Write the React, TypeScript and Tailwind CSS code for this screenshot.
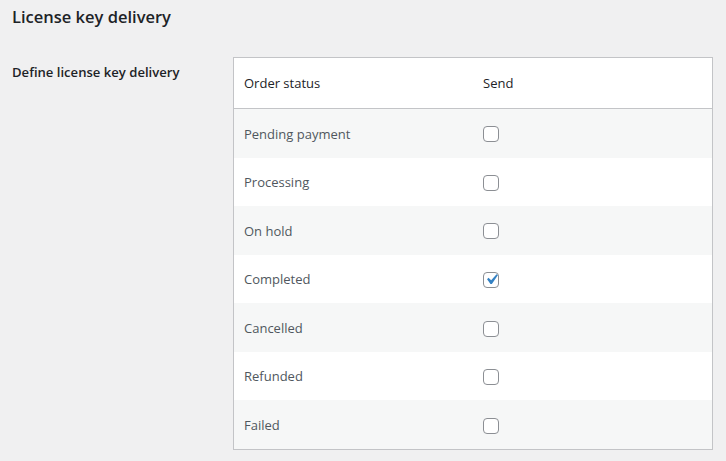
import React from 'react'

const statuses = [
  { label: 'Pending payment', checked: false },
  { label: 'Processing', checked: false },
  { label: 'On hold', checked: false },
  { label: 'Completed', checked: true },
  { label: 'Cancelled', checked: false },
  { label: 'Refunded', checked: false },
  { label: 'Failed', checked: false },
]

const Checkbox = ({ checked }: { checked: boolean }) => (
  <span className="relative block h-4 w-4 rounded-[4px] border border-[#8c8f94] bg-white">
    {checked && (
      <svg viewBox="0 0 20 20" className="absolute left-[-3.5px] top-[-3.5px] h-[21px] w-[21px]">
        <path d="M14.83 4.89l1.34.94-5.81 8.38H9.02L5.78 9.67l1.34-1.25 2.57 2.4z" fill="#3582c4" />
      </svg>
    )}
  </span>
)

export default function App() {
  return (
    <div className="min-h-[461px] w-[726px] bg-[#f0f0f1] px-[12px] pt-[5px] text-[13px] text-[#1d2327]" style={{ fontFamily: '"Open Sans", "Noto Sans", sans-serif' }}>
      <h2 className="text-[16.5px] font-semibold leading-[24px]">License key delivery</h2>
      <div className="mt-[28px] flex">
        <div className="w-[221px] shrink-0 pt-[6px] text-[13.1px] font-semibold leading-[18px]">Define license key delivery</div>
        <div className="w-[480px] border border-[#c3c4c7] bg-white">
          <div className="flex h-[51px] items-center border-b border-[#c3c4c7] pt-[2px] font-medium text-[#1d2327]">
            <div className="w-[249px] pl-[10px]">Order status</div>
            <div>Send</div>
          </div>
          {statuses.map((s, i) => (
            <div key={s.label} className={`flex h-[48.57px] items-center pt-[2px] text-[#50575e] ${i % 2 === 0 ? 'bg-[#f6f7f7]' : 'bg-white'}`}>
              <div className="w-[249px] pl-[10px]">{s.label}</div>
              <Checkbox checked={s.checked} />
            </div>
          ))}
        </div>
      </div>
    </div>
  )
}
